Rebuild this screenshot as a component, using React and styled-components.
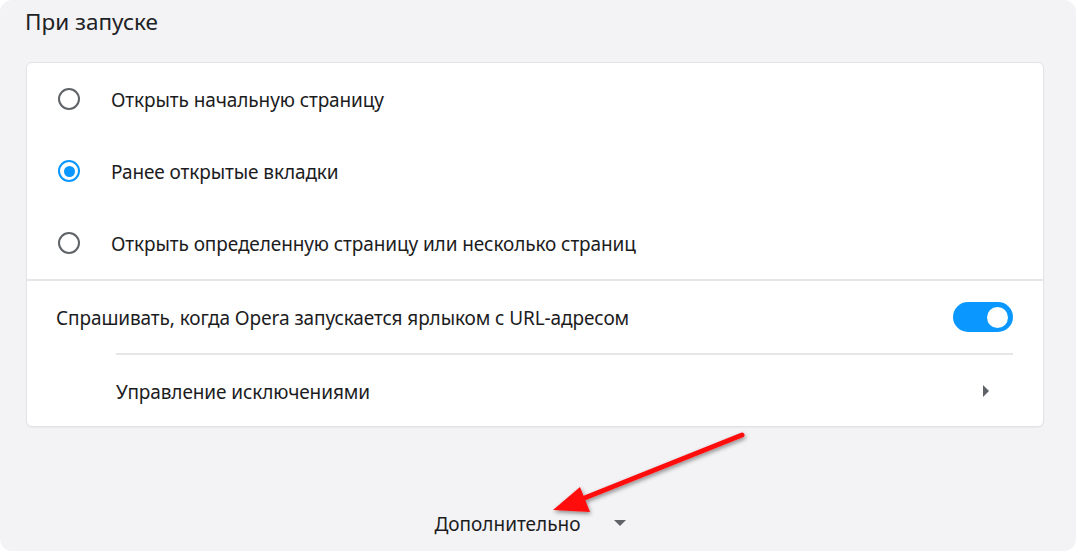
import React from 'react';
import styled, { createGlobalStyle } from 'styled-components';

const Global = createGlobalStyle`
  html, body {
    margin: 0;
    background: #ffffff;
  }
  body {
    font-family: 'Noto Sans', 'Open Sans', sans-serif;
    color: #202124;
  }
`;

const options = [
  { label: 'Открыть начальную страницу', checked: false },
  { label: 'Ранее открытые вкладки', checked: true },
  { label: 'Открыть определенную страницу или несколько страниц', checked: false },
];

const App = () => {
  return (
    <>
      <Global />
      <Panel>
        <Title>При запуске</Title>
        <Card>
          <RadioGroup>
            {options.map((o) => (
              <RadioRow key={o.label}>
                <Radio checked={o.checked} />
                <Label>{o.label}</Label>
              </RadioRow>
            ))}
          </RadioGroup>
          <ToggleRow>
            <Label>Спрашивать, когда Opera запускается ярлыком с URL-адресом</Label>
            <Toggle on />
          </ToggleRow>
          <SubRow>
            <Label>Управление исключениями</Label>
            <Chevron />
          </SubRow>
        </Card>
        <More>
          <MoreText>Дополнительно</MoreText>
          <Caret />
        </More>
        <Arrow width="200" height="90" viewBox="0 0 200 90">
          <defs>
            <filter id="sh" x="-20%" y="-40%" width="140%" height="180%">
              <feDropShadow dx="1" dy="2" stdDeviation="2" floodColor="#000" floodOpacity="0.45" />
            </filter>
          </defs>
          <g filter="url(#sh)">
            <line x1="194" y1="7" x2="34" y2="71" stroke="#ff0f0f" strokeWidth="5" strokeLinecap="round" />
            <polygon points="5,82 32,59 42,84" fill="#ff0f0f" />
          </g>
        </Arrow>
      </Panel>
    </>
  );
};

export default App;

const Panel = styled.div`
  position: relative;
  box-sizing: border-box;
  width: 1076px;
  height: 551px;
  background: #f3f3f5;
  border-radius: 12px;
  padding: 8px 32px 0 26px;
`;

const Title = styled.h2`
  margin: 0 0 0 -1px;
  height: 54px;
  font-size: 22.5px;
  font-weight: 400;
  line-height: 28px;
  color: #202124;
`;

const Card = styled.div`
  background: #ffffff;
  border: 1px solid #e3e3e6;
  border-radius: 6px;
  box-shadow: 0 1px 1px rgba(0, 0, 0, 0.04);
`;

const RadioGroup = styled.div`
  border-bottom: 2px solid #e6e6e8;
`;

const RadioRow = styled.div`
  display: flex;
  align-items: center;
  height: 72px;
  padding-left: 31px;
`;

const Radio = styled.span`
  box-sizing: border-box;
  width: 22px;
  height: 22px;
  border-radius: 50%;
  border: 2.5px solid ${(p) => (p.checked ? '#0a97ff' : '#5f6368')};
  margin-right: 31px;
  display: flex;
  align-items: center;
  justify-content: center;
  &::after {
    content: '';
    display: ${(p) => (p.checked ? 'block' : 'none')};
    width: 11px;
    height: 11px;
    border-radius: 50%;
    background: #0a97ff;
  }
`;

const Label = styled.span`
  font-size: 19px;
  color: #1c1c1e;
  letter-spacing: -0.1px;
  padding-top: 2px;
`;

const ToggleRow = styled.div`
  display: flex;
  align-items: center;
  justify-content: space-between;
  height: 72px;
  padding: 0 30px 0 29px;
`;

const Toggle = styled.span`
  position: relative;
  width: 60px;
  height: 30px;
  border-radius: 15px;
  background: ${(p) => (p.on ? '#0a97ff' : '#bdc1c6')};
  &::after {
    content: '';
    position: absolute;
    top: 5px;
    left: ${(p) => (p.on ? '34px' : '5px')};
    width: 21px;
    height: 21px;
    border-radius: 50%;
    background: #ffffff;
  }
`;

const SubRow = styled.div`
  display: flex;
  align-items: center;
  justify-content: space-between;
  height: 71px;
  margin: 0 30px 0 89px;
  border-top: 2px solid #e6e6e8;
  padding-right: 24px;
`;

const Chevron = styled.span`
  width: 0;
  height: 0;
  border-top: 6px solid transparent;
  border-bottom: 6px solid transparent;
  border-left: 6px solid #5f6368;
`;

const More = styled.div`
  display: flex;
  align-items: center;
  justify-content: center;
  gap: 33px;
  margin-top: 82px;
  padding-right: 10px;
`;

const MoreText = styled.span`
  font-size: 19px;
  color: #1c1c1e;
  padding-top: 2px;
`;

const Caret = styled.span`
  width: 0;
  height: 0;
  border-left: 6px solid transparent;
  border-right: 6px solid transparent;
  border-top: 6px solid #5f6368;
`;

const Arrow = styled.svg`
  position: absolute;
  left: 548px;
  top: 428px;
  overflow: visible;
`;
